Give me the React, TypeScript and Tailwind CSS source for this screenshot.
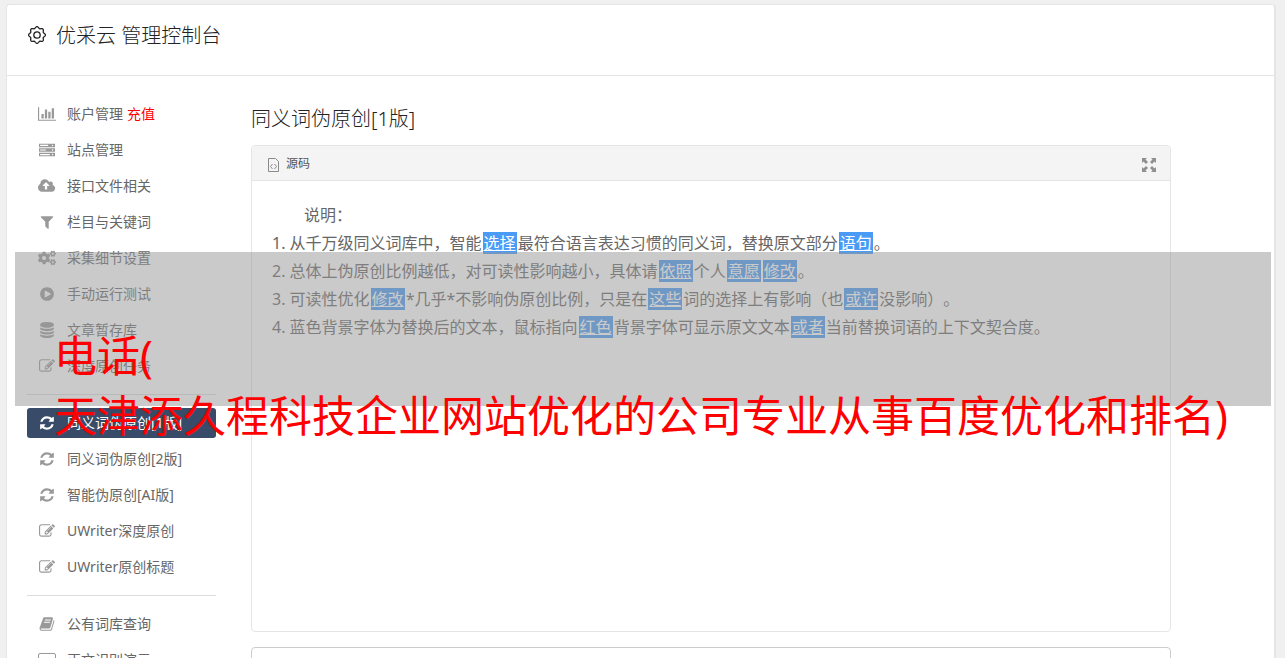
import { ReactNode } from 'react';
import { FaCogs } from 'react-icons/fa';

interface NavItem {
  label: string;
  icon: ReactNode;
  extra?: string;
  active?: boolean;
}

function Glyph({ d, width = 1792, className = 'h-4' }: { d: string; width?: number; className?: string }) {
  return (
    <svg viewBox={`0 0 ${width} 1792`} className={className} fill="currentColor" aria-hidden="true">
      <path d={d} />
    </svg>
  );
}

const refresh = (
  <Glyph d="M1639 1056q0 5-1 7-64 268-268 434.5t-478 166.5q-146 0-282.5-55t-243.5-157l-129 129q-19 19-45 19t-45-19-19-45v-448q0-26 19-45t45-19h448q26 0 45 19t19 45-19 45l-137 137q71 66 161 102t187 36q134 0 250-65t186-179q11-17 53-117 8-23 30-23h192q13 0 22.5 9.5t9.5 22.5zm25-800v448q0 26-19 45t-45 19h-448q-26 0-45-19t-19-45 19-45l138-138q-148-137-349-137-134 0-250 65t-186 179q-11 17-53 117-8 23-30 23h-199q-13 0-22.5-9.5t-9.5-22.5v-7q65-268 270-434.5t480-166.5q146 0 284 55.5t245 156.5l130-129q19-19 45-19t45 19 19 45z" />
);

const pencil = (
  <Glyph d="M888 1184l116-116-152-152-116 116v56h96v96h56zm440-720q-16-16-33 1l-350 350q-17 17-1 33t33-1l350-350q17-17 1-33zm80 594v190q0 119-84.5 203.5t-203.5 84.5h-832q-119 0-203.5-84.5t-84.5-203.5v-832q0-119 84.5-203.5t203.5-84.5h832q63 0 117 25 15 7 18 23 3 17-9 29l-49 49q-14 14-32 8-23-6-45-6h-832q-66 0-113 47t-47 113v832q0 66 47 113t113 47h832q66 0 113-47t47-113v-126q0-13 9-22l64-64q15-15 35-7t20 29zm-96-738l288 288-672 672h-288v-288zm444 132l-92 92-288-288 92-92q28-28 68-28t68 28l152 152q28 28 28 68t-28 68z" />
);

const chart = (
  <Glyph width={2048} d="M640 896v512h-256v-512h256zm384-512v1024h-256v-1024h256zm1024 1152v128h-2048v-1536h128v1408h1920zm-640-896v768h-256v-768h256zm384-384v1152h-256v-1152h256z" />
);

const server = (
  <Glyph d="M0 192h1792v384h-1792zM128 320v128h896v-128zM1440 384a80 80 0 1 0 160 0a80 80 0 1 0-160 0zM0 704h1792v384h-1792zM128 832v128h640v-128zM1440 896a80 80 0 1 0 160 0a80 80 0 1 0-160 0zM0 1216h1792v384h-1792zM128 1344v128h1088v-128zM1440 1408a80 80 0 1 0 160 0a80 80 0 1 0-160 0z" />
);

const cloud = (
  <Glyph width={1920} d="M1280 864q0-14-9-23l-352-352q-9-9-23-9t-23 9l-351 351q-10 12-10 24 0 14 9 23t23 9h224v352q0 13 9.5 22.5t22.5 9.5h192q13 0 22.5-9.5t9.5-22.5v-352h224q13 0 22.5-9.5t9.5-22.5zm640 288q0 159-112.5 271.5t-271.5 112.5h-1088q-185 0-316.5-131.5t-131.5-316.5q0-130 70-240t188-165q-2-30-2-43 0-212 150-362t362-150q156 0 285.5 87t188.5 231q71-62 166-62 106 0 181 75t75 181q0 76-41 138 130 31 213.5 135.5t83.5 238.5z" />
);

const funnel = (
  <Glyph d="M1595 295q17 41-14 70l-493 493v742q0 42-39 59-13 5-25 5-27 0-45-19l-256-256q-19-19-19-45v-486l-493-493q-31-29-14-70 17-39 59-39h1280q42 0 59 39z" />
);

const play = (
  <Glyph d="M896 128q209 0 385.5 103t279.5 279.5 103 385.5-103 385.5-279.5 279.5-385.5 103-385.5-103-279.5-279.5-103-385.5 103-385.5 279.5-279.5 385.5-103zm384 823q32-18 32-55t-32-55l-544-320q-31-19-64-1-32 19-32 56v640q0 37 32 56 16 8 32 8 17 0 32-9z" />
);

const database = (
  <Glyph d="M896 768q237 0 443-43t325-127v170q0 69-103 128t-280 93.5-385 34.5-385-34.5-280-93.5-103-128v-170q119 84 325 127t443 43zm0 768q237 0 443-43t325-127v170q0 69-103 128t-280 93.5-385 34.5-385-34.5-280-93.5-103-128v-170q119 84 325 127t443 43zm0-384q237 0 443-43t325-127v170q0 69-103 128t-280 93.5-385 34.5-385-34.5-280-93.5-103-128v-170q119 84 325 127t443 43zm0-1152q208 0 385 34.5t280 93.5 103 128v128q0 69-103 128t-280 93.5-385 34.5-385-34.5-280-93.5-103-128v-128q0-69 103-128t280-93.5 385-34.5z" />
);

const book = (
  <Glyph d="M1703 478q40 57 18 129l-275 906q-19 64-76.5 107.5t-122.5 43.5h-923q-77 0-148.5-53.5t-99.5-131.5q-24-67-2-127 0-4 3-27t4-37q1-8-3-21.5t-3-19.5q2-11 8-21t16.5-23.5 16.5-23.5q23-38 45-91.5t30-91.5q3-10 .5-30t-.5-28q3-11 17-28t17-23q21-36 42-92t25-90q1-9-2.5-32t.5-28q4-13 22-30.5t22-22.5q19-26 42.5-84.5t27.5-96.5q1-8-3-25.5t-2-26.5q2-8 9-18t18-23 17-21q8-12 16.5-30.5t15-35 16-36 19.5-32 26.5-23.5 36-11.5 47.5 5.5l-1 3q38-9 51-9h761q74 0 114 56t18 130l-274 906q-36 119-71.5 153.5t-128.5 34.5h-869q-27 0-38 15-11 16-1 43 24 70 144 70h923q29 0 56-15.5t35-41.5l300-987q7-22 5-57 38 15 59 43zm-1064 2q-4 13 2 22.5t20 9.5h608q13 0 25.5-9.5t16.5-22.5l21-64q4-13-2-22.5t-20-9.5h-608q-13 0-25.5 9.5t-16.5 22.5zm-83 256q-4 13 2 22.5t20 9.5h608q13 0 25.5-9.5t16.5-22.5l21-64q4-13-2-22.5t-20-9.5h-608q-13 0-25.5 9.5t-16.5 22.5z" />
);

const screen = (
  <svg viewBox="0 0 18 16" className="h-4" fill="none" stroke="currentColor" aria-hidden="true">
    <rect x="0.5" y="1.5" width="17" height="11" rx="1.5" />
    <path d="M5 15h8" />
  </svg>
);

const groups: NavItem[][] = [
  [
    { label: '账户管理', icon: chart, extra: '充值' },
    { label: '站点管理', icon: server },
    { label: '接口文件相关', icon: cloud },
    { label: '栏目与关键词', icon: funnel },
    { label: '采集细节设置', icon: <FaCogs className="size-[18px]" /> },
    { label: '手动运行测试', icon: play },
    { label: '文章暂存库', icon: database },
    { label: '深度原创任务', icon: pencil },
  ],
  [
    { label: '同义词伪原创[1版]', icon: refresh, active: true },
    { label: '同义词伪原创[2版]', icon: refresh },
    { label: '智能伪原创[AI版]', icon: refresh },
    { label: 'UWriter深度原创', icon: pencil },
    { label: 'UWriter原创标题', icon: pencil },
  ],
  [
    { label: '公有词库查询', icon: book },
    { label: '正文识别演示', icon: screen },
  ],
];

// Outline with evenly spaced rounded teeth
function gearPath(teeth: number, radius: number, depth: number) {
  const points: string[] = [];
  for (let i = 0; i < 180; i++) {
    const a = (i / 180) * Math.PI * 2;
    const r = radius + depth * Math.cos(teeth * a);
    points.push(`${(10 + r * Math.sin(a)).toFixed(2)} ${(10 - r * Math.cos(a)).toFixed(2)}`);
  }
  return `M${points.join('L')}Z`;
}

function GearIcon() {
  return (
    <svg viewBox="0 0 20 20" className="size-5" fill="none" stroke="currentColor" strokeWidth="1.3" aria-hidden="true">
      <path d={gearPath(8, 7.6, 0.8)} />
      <circle cx="10" cy="10" r="3.2" />
    </svg>
  );
}

function Mark({ children }: { children: ReactNode }) {
  return <span className="mx-px bg-[#4a9bf5] px-px text-white underline">{children}</span>;
}

function Sidebar() {
  return (
    <nav className="w-[189px] shrink-0">
      {groups.map((items, index) => (
        <ul key={index} className={index > 0 ? 'mt-[13px] space-y-1.5 border-t border-[#dcdcdc] pt-[13px]' : 'space-y-1.5'}>
          {items.map((item) => (
            <li key={item.label}>
              <a
                href="#"
                className={
                  item.active
                    ? 'flex h-[30px] items-center rounded-[3px] bg-[#384b68] pl-2.5 text-sm text-white'
                    : 'flex h-[30px] items-center pl-2.5 text-sm text-[#666]'
                }
              >
                <span className={item.active ? 'mr-2.5 flex w-5 justify-center' : 'mr-2.5 flex w-5 justify-center text-[#999]'}>
                  {item.icon}
                </span>
                {item.label}
                {item.extra && <span className="ml-1 text-[#f00]">{item.extra}</span>}
              </a>
            </li>
          ))}
        </ul>
      ))}
    </nav>
  );
}

function SourcePanel() {
  return (
    <div className="overflow-hidden rounded-[4px] border border-[#e5e5e5]">
      <div className="flex h-[35px] items-center justify-between border-b border-[#e5e5e5] bg-[#f4f4f4] pr-3.5 pl-4">
        <div className="flex items-center gap-[7px] text-xs text-[#555]">
          <svg viewBox="0 0 11 14" className="mt-1 h-3.5" fill="none" stroke="#8a8a8a" aria-hidden="true">
            <path d="M.5.5h7l3 3v10h-10zM4.5 6l-2 2.5 2 2.5M6.5 6l2 2.5-2 2.5" />
          </svg>
          <span className="pt-0.5">源码</span>
        </div>
        <button type="button" aria-label="全屏" className="mt-1 text-[#8f8f8f]">
          <svg viewBox="0 0 14 14" className="size-3.5" fill="currentColor" aria-hidden="true">
            <path d="M0 0h5L3.500 1.500 6 4 4 6 1.500 3.500 0 5zM14 0v5l-1.500-1.500L10 6 8 4l2.500-2.500L9 0zM0 14V9l1.500 1.500L4 8l2 2-2.500 2.500L5 14zM14 14H9l1.500-1.500L8 10l2-2 2.500 2.500L14 9z" />
          </svg>
        </button>
      </div>
      <div className="min-h-[450px] px-5 py-5 text-base leading-7 text-[#666]">
        <p className="pl-8">说明：</p>
        <p>1. 从千万级同义词库中，智能<Mark>选择</Mark>最符合语言表达习惯的同义词，替换原文部分<Mark>语句</Mark>。</p>
        <p>2. 总体上伪原创比例越低，对可读性影响越小，具体请<Mark>依照</Mark>个人<Mark>意愿</Mark><Mark>修改</Mark>。</p>
        <p>3. 可读性优化<Mark>修改</Mark>*几乎*不影响伪原创比例，只是在<Mark>这些</Mark>词的选择上有影响（也<Mark>或许</Mark>没影响）。</p>
        <p>4. 蓝色背景字体为替换后的文本，鼠标指向<Mark>红色</Mark>背景字体可显示原文文本<Mark>或者</Mark>当前替换词语的上下文契合度。</p>
      </div>
    </div>
  );
}

export default function App() {
  return (
    <div
      lang="zh-CN"
      className="relative h-screen overflow-hidden bg-[#f0f0f0] pt-1 pr-[9px] pl-1.5 font-['Noto_Sans','Noto_Sans_CJK_SC',sans-serif] [text-spacing-trim:space-all]"
    >
      <div className="min-h-full rounded-t-[4px] border border-r-2 border-[#e5e5e5] bg-white">
        <header className="flex h-[71px] items-start gap-[9px] border-b border-[#e5e5e5] px-5 pt-4 text-[#222]">
          <span className="pt-1"><GearIcon /></span>
          <h1 className="text-xl leading-[30px] font-light">优采云 管理控制台</h1>
        </header>
        <div className="flex gap-[35px] py-[23px] pr-[103px] pl-5">
          <Sidebar />
          <main className="min-w-0 flex-1">
            <h2 className="pt-[5px] pb-[11px] text-xl leading-[30px] font-light text-[#222]">同义词伪原创[1版]</h2>
            <SourcePanel />
            <div className="mt-[15px] h-20 rounded-[4px] border border-[#ccc]" />
          </main>
        </div>
      </div>

      {/* Caption banner over the console */}
      <div className="absolute top-[252px] right-3.5 left-[15px] h-[154px] bg-[#959595]/50 pt-[74px] pl-[39px]">
        <p className="text-[43px] leading-[60px] whitespace-nowrap text-[#f00]">
          电话(
          <br />
          天津添久程科技企业网站优化的公司专业从事百度优化和排名)
        </p>
      </div>
    </div>
  );
}
